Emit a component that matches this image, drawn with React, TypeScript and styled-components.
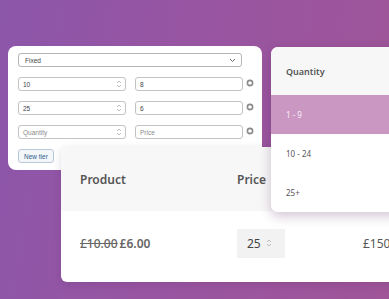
import React from 'react'
import styled, { createGlobalStyle } from 'styled-components'

const Global = createGlobalStyle`
  html, body { margin: 0; padding: 0; }
  body { width: 389px; height: 299px; overflow: hidden; font-family: "Noto Sans", "Open Sans", sans-serif; }
`

const tiers = [
  { qty: '10', price: '8' },
  { qty: '25', price: '6' },
]

const ranges = ['1 - 9', '10 - 24', '25+']

const Remove = () => (
  <RemoveIcon width="8" height="8" viewBox="0 0 8 8">
    <circle cx="4" cy="4" r="2.6" fill="none" stroke="#8a8a8a" strokeWidth="1.6" />
  </RemoveIcon>
)

const Spin = () => (
  <svg width="6" height="10" viewBox="0 0 6 10">
    <path d="M1 4 L3 2 L5 4 M1 6 L3 8 L5 6" fill="none" stroke="#b8b8b8" strokeWidth="0.9" />
  </svg>
)

export default function App() {
  return (
    <Canvas>
      <Global />
      <Admin>
        <Select>
          <span>Fixed</span>
          <svg width="7" height="5" viewBox="0 0 7 5">
            <path d="M1 1 L3.5 3.5 L6 1" fill="none" stroke="#666" strokeWidth="1" />
          </svg>
        </Select>
        {tiers.map((t) => (
          <TierRow key={t.qty}>
            <Field>
              <span>{t.qty}</span>
              <Spin />
            </Field>
            <Field>{t.price}</Field>
            <Remove />
          </TierRow>
        ))}
        <TierRow>
          <Field $placeholder>
            <span>Quantity</span>
            <Spin />
          </Field>
          <Field $placeholder>Price</Field>
          <Remove />
        </TierRow>
        <NewTier>New tier</NewTier>
      </Admin>

      <Cart>
        <CartHead>
          <ProductCol>Product</ProductCol>
          <PriceCol>Price</PriceCol>
        </CartHead>
        <CartRow>
          <ProductCol>
            <Old>£10.00</Old>£6.00
          </ProductCol>
          <PriceCol>
            <QtyBox>
              25 <Spin />
            </QtyBox>
          </PriceCol>
          <Total>£150</Total>
        </CartRow>
      </Cart>

      <Tiers>
        <TiersHead>Quantity</TiersHead>
        {ranges.map((r, i) => (
          <TierCell key={r} $active={i === 0}>
            {r}
          </TierCell>
        ))}
      </Tiers>
    </Canvas>
  )
}

const Canvas = styled.div`
  position: relative;
  width: 389px;
  height: 299px;
  overflow: hidden;
  background: linear-gradient(100deg, #8c56a9 0%, #9855a2 45%, #9f5598 100%);
`

const Admin = styled.div`
  position: absolute;
  left: 8px;
  top: 46px;
  width: 254px;
  height: 124px;
  box-sizing: border-box;
  background: #fff;
  border-radius: 8px;
  padding: 7px 10px;
  display: flex;
  flex-direction: column;
  gap: 9px;
  font-family: "Liberation Sans", Arial, sans-serif;
  font-size: 6.5px;
  color: #3c434a;
`

const Select = styled.div`
  width: 224px;
  height: 14px;
  box-sizing: border-box;
  border: 1px solid #b5b5b5;
  border-radius: 3px;
  padding: 0 5px 0 6px;
  display: flex;
  align-items: center;
  justify-content: space-between;
`

const TierRow = styled.div`
  display: flex;
  align-items: center;
  gap: 9px;
  height: 14px;
  margin-top: 1px;
`

const Field = styled.div<{ $placeholder?: boolean }>`
  flex: 0 0 auto;
  width: 108px;
  height: 14px;
  box-sizing: border-box;
  border: 1px solid #c3c3c3;
  border-radius: 3px;
  padding: 0 3px 0 4px;
  display: flex;
  align-items: center;
  justify-content: space-between;
  color: ${(p) => (p.$placeholder ? '#8a8a8a' : '#3c434a')};
`

const RemoveIcon = styled.svg`
  flex: 0 0 auto;
  margin-left: -6px;
  margin-top: -2px;
`

const NewTier = styled.div`
  align-self: flex-start;
  margin-top: 1px;
  height: 14px;
  padding: 0 5px;
  box-sizing: border-box;
  border: 1px solid #b9c8d8;
  border-radius: 3px;
  background: #f4f7fa;
  color: #2c5c8a;
  display: flex;
  align-items: center;
`

const Cart = styled.div`
  position: absolute;
  left: 61px;
  top: 147px;
  width: 360px;
  height: 135px;
  background: #fff;
  border-radius: 6px;
  overflow: hidden;
  box-shadow: 0 2px 8px rgba(60, 20, 70, 0.15);
  display: flex;
  flex-direction: column;
`

const CartHead = styled.div`
  height: 64px;
  background: #f7f7f7;
  display: flex;
  align-items: center;
  padding-left: 19px;
  font-size: 12px;
  font-weight: 600;
  color: #555;
`

const CartRow = styled.div`
  flex: 1;
  display: flex;
  align-items: center;
  padding-left: 19px;
  padding-bottom: 7px;
  font-size: 12px;
  font-weight: 600;
  color: #666;
`

const ProductCol = styled.div`
  width: 157px;
`

const PriceCol = styled.div`
  width: 126px;
`

const Old = styled.span`
  text-decoration: line-through;
  font-weight: 500;
  margin-right: 2px;
`

const QtyBox = styled.div`
  width: 48px;
  height: 29px;
  box-sizing: border-box;
  background: #f2f2f3;
  display: flex;
  align-items: center;
  gap: 5px;
  padding-left: 10px;
  font-size: 12px;
  font-weight: 400;
  color: #444;
`

const Total = styled.div`
  font-weight: 400;
  color: #555;
`

const Tiers = styled.div`
  position: absolute;
  left: 271px;
  top: 47px;
  width: 140px;
  height: 165px;
  background: #fff;
  border-radius: 7px;
  overflow: hidden;
  box-shadow: 0 4px 12px rgba(70, 20, 80, 0.25);
  display: flex;
  flex-direction: column;
  font-size: 8px;
  color: #555;
`

const TiersHead = styled.div`
  height: 48px;
  background: #f7f7f7;
  display: flex;
  align-items: center;
  padding-left: 15px;
  font-size: 9px;
  font-weight: 600;
`

const TierCell = styled.div<{ $active: boolean }>`
  height: 39px;
  display: flex;
  align-items: center;
  padding-left: 15px;
  background: ${(p) => (p.$active ? '#c997c2' : '#fff')};
  color: ${(p) => (p.$active ? '#fbeef8' : '#555')};
`
